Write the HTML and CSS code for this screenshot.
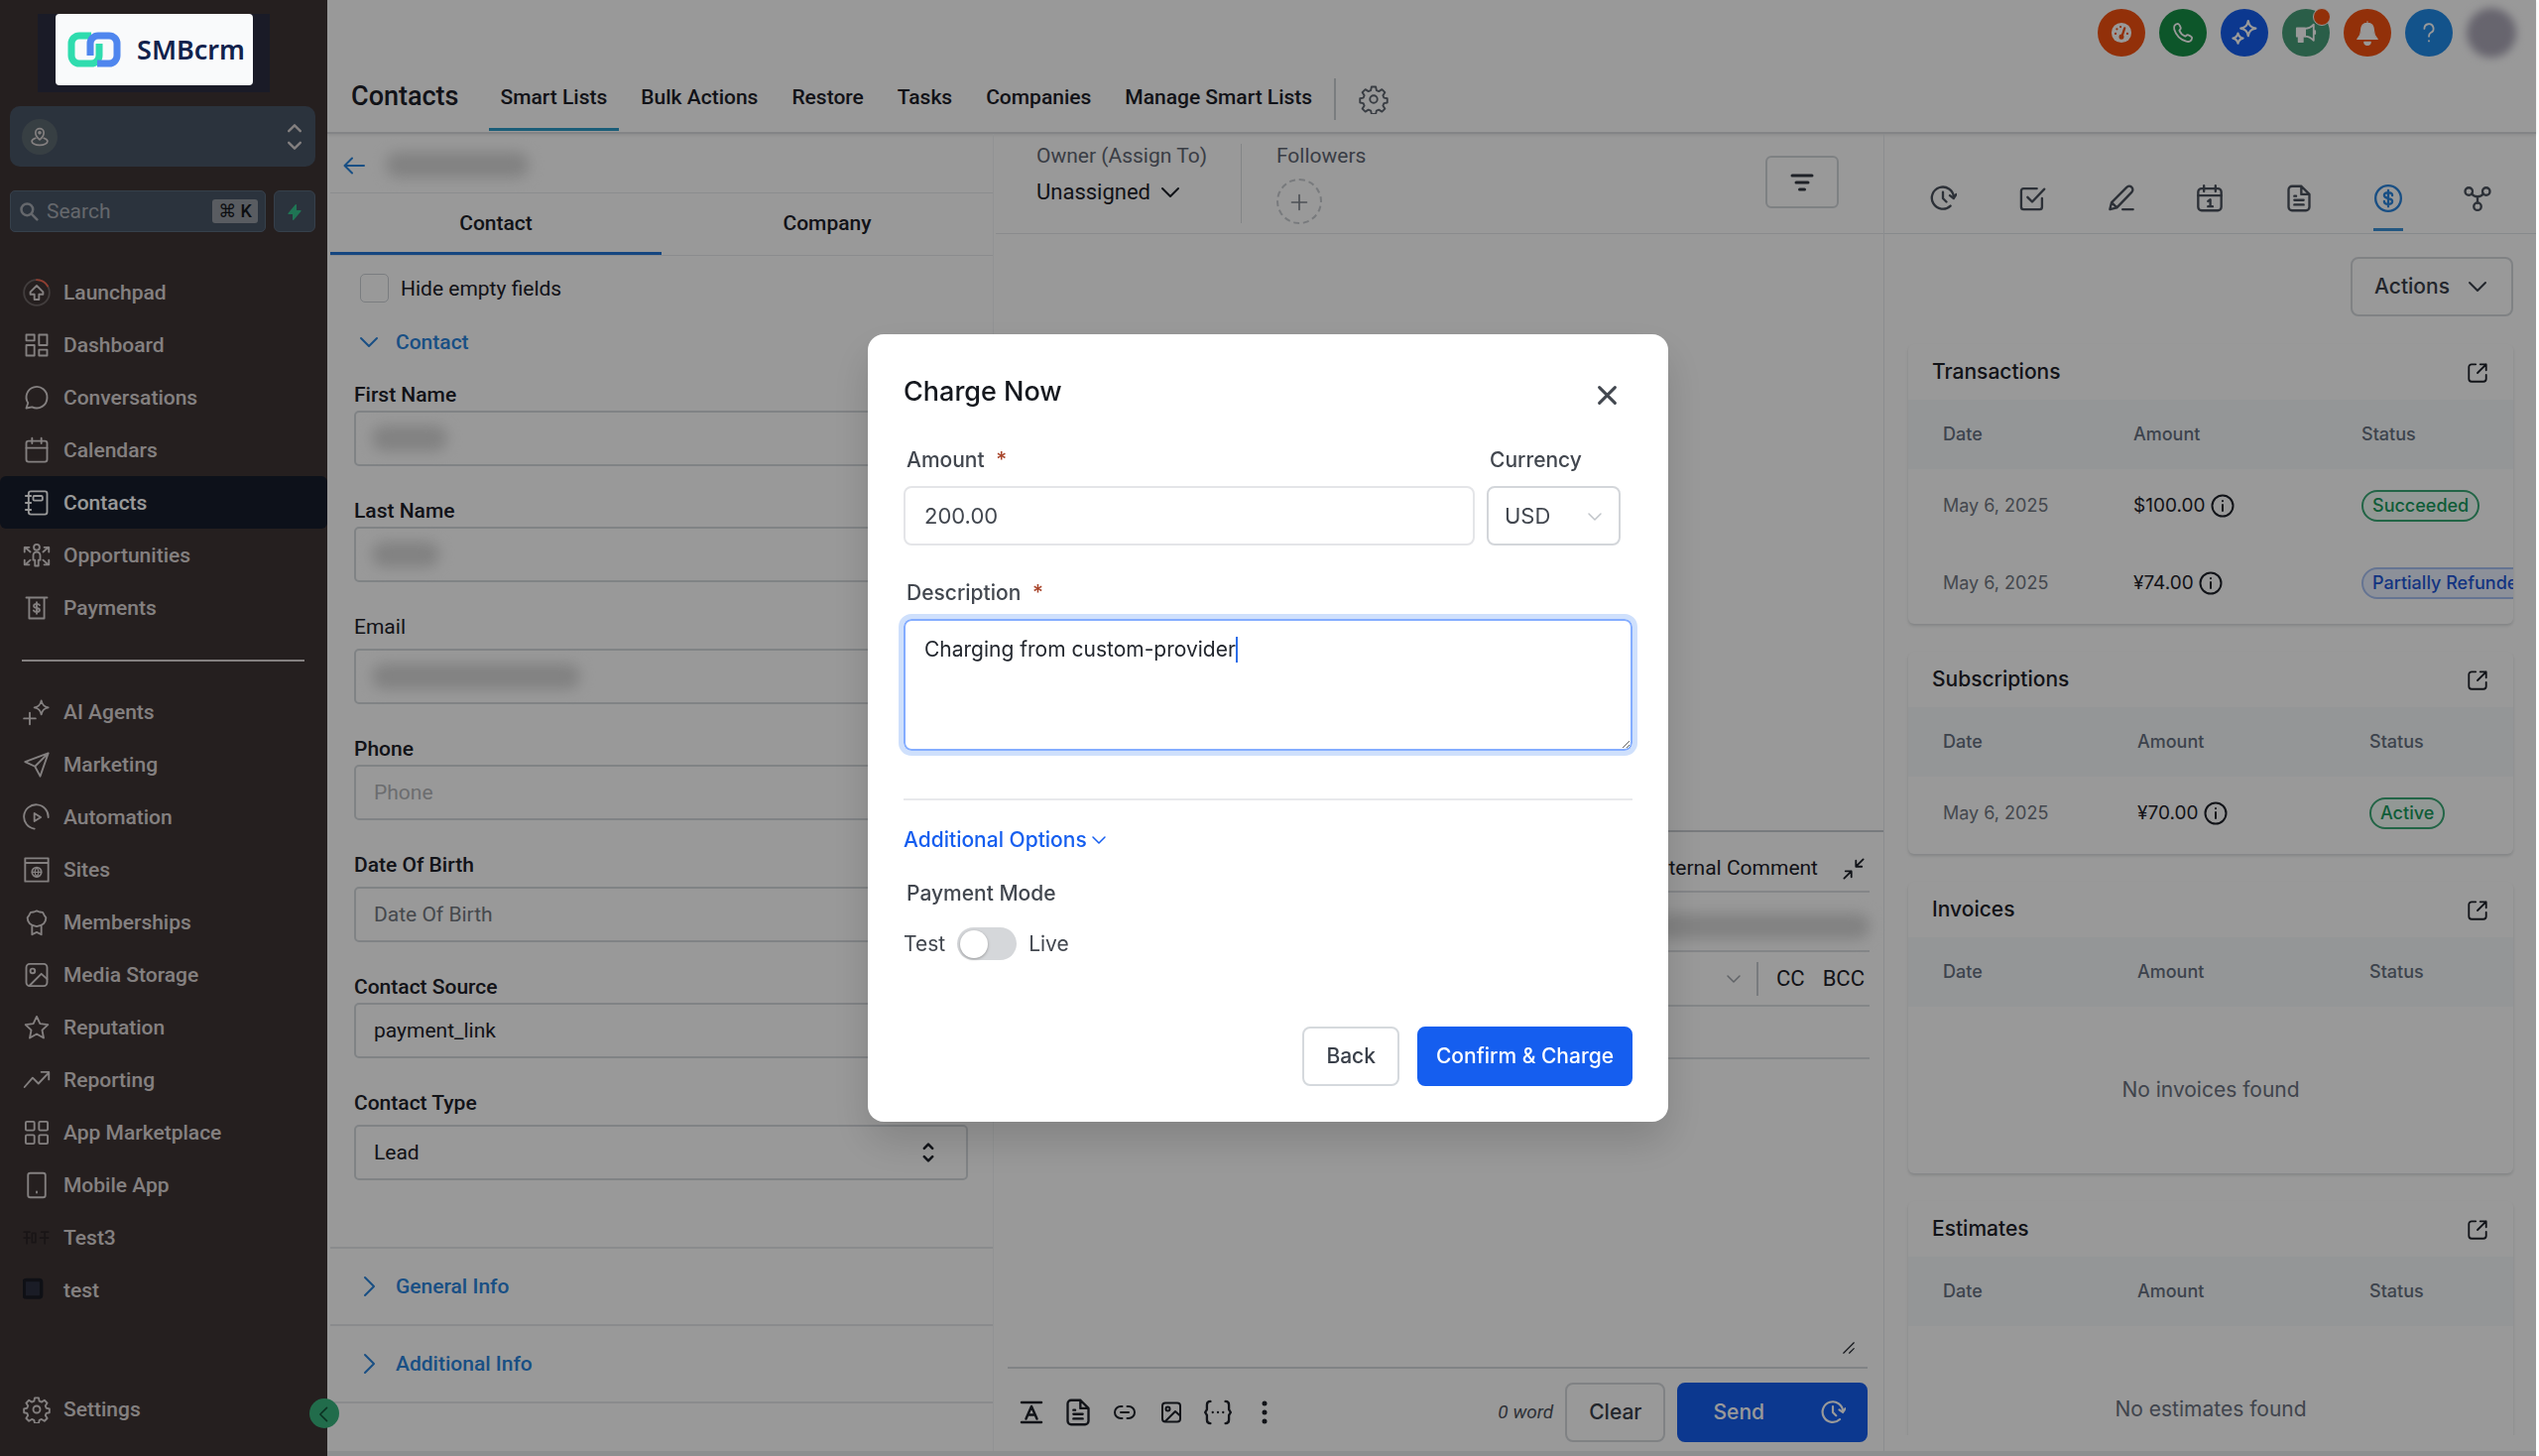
FILE: index.html
```html
<!DOCTYPE html>
<html lang="en">
<head>
    <meta charset="utf-8">
    <meta name="viewport" content="width=device-width, initial-scale=1">
    <title>Contacts</title>
    <link rel="stylesheet" href="styles.css">
</head>
<body>
    <!-- icon sprite -->
    <svg class="sprite" xmlns="http://www.w3.org/2000/svg">
        <symbol id="i-pin" viewBox="0 0 24 24"><path d="M12 15.500s5-4 5-8.500a5 5 0 0 0-10 0c0 4.500 5 8.500 5 8.500z"/><circle cx="12" cy="7" r="1.200"/><path d="M7 13.500C4 14.500 2.500 15.800 2.500 17.500 2.500 20 7 22 12 22s9.500-2 9.500-4.500c0-1.700-1.500-3-4.500-4"/></symbol>
        <symbol id="i-search" viewBox="0 0 24 24"><circle cx="10" cy="10" r="7"/><path d="M15.500 15.500 22 22"/></symbol>
        <symbol id="i-bolt" viewBox="0 0 24 24"><path d="M14 1 3 14h7v9l11-13h-7z" fill="currentColor"/></symbol>
        <symbol id="i-launch" viewBox="0 0 24 24"><circle cx="12" cy="12" r="11" opacity=".3"/><path d="M12 1a11 11 0 0 1 9.500 5.500" stroke="#f0644e"/><path d="m12 6-5.500 5.500v2H10V18h4v-4.500h3.500v-2z"/></symbol>
        <symbol id="i-dash" viewBox="0 0 24 24"><path d="M3 3h7v5H3zM3 12h7v9H3zM14 3h7v9h-7zM14 16h7v5h-7z"/></symbol>
        <symbol id="i-chat" viewBox="0 0 24 24"><path d="M21 12a9 9 0 0 1-13 8l-5 1 1.500-4.500A9 9 0 1 1 21 12z"/></symbol>
        <symbol id="i-cal" viewBox="0 0 24 24"><rect x="3" y="4" width="18" height="18" rx="2"/><path d="M3 10h18M8 1.500V6M16 1.500V6"/></symbol>
        <symbol id="i-book" viewBox="0 0 24 24"><rect x="5" y="2" width="16" height="20" rx="2"/><rect x="9" y="6" width="8" height="4" rx="1"/><path d="M2.500 6H7M2.500 12H7M2.500 18H7"/></symbol>
        <symbol id="i-opp" viewBox="0 0 24 24"><circle cx="12" cy="5" r="2.500"/><path d="M12 9a3 3 0 0 0-3 3v4h1.500v5h3v-5H15v-4a3 3 0 0 0-3-3zM1.500 9V5h4M2 5l4.500 4M22.500 9V5h-4M22 5l-4.500 4M1.500 16v4h4M2 20l4.500-4M22.500 16v4h-4M22 20l-4.500-4"/></symbol>
        <symbol id="i-pay" viewBox="0 0 24 24"><path d="M3 3h18M5.500 3v18h13V3M14.500 9.500C14 8.500 13 8.500 12 8.500c-1.500 0-2.500.7-2.500 1.700 0 2.600 5 1 5 3.600 0 1-1 1.700-2.500 1.700-1.200 0-2.200-.4-2.700-1.300M12 7v10"/></symbol>
        <symbol id="i-ai" viewBox="0 0 24 24"><path d="M16 2c.8 3.800 2.200 5.200 6 6-3.800.8-5.200 2.200-6 6-.8-3.800-2.200-5.200-6-6 3.800-.8 5.200-2.200 6-6zM6 12.500v10M1 17.500h10"/></symbol>
        <symbol id="i-plane" viewBox="0 0 24 24"><path d="M22 2 2 9.500l8.500 4L15 22zM22 2 10.500 13.500"/></symbol>
        <symbol id="i-auto" viewBox="0 0 24 24"><path d="M10 22A10.500 10.500 0 1 1 22 12"/><path d="M10 8.500v7l5.500-3.500z"/></symbol>
        <symbol id="i-site" viewBox="0 0 24 24"><path d="M2 2h20v20H2zM2 6h20"/><circle cx="12" cy="14" r="4"/><path d="M8 14h8M12 10c-2 2.500-2 5.500 0 8 2-2.500 2-5.500 0-8z" stroke-width="1"/></symbol>
        <symbol id="i-member" viewBox="0 0 24 24"><path d="m12 2 2.500 1 2.700.3 1.300 2.400L20 8l-.5 2.700L18 13l-2.400 1.500L12 15.500l-3.600-1L6 13l-1.500-2.300L4 8l1.500-2.300 1.300-2.400L9.500 3zM8 15v7.500l4-2 4 2V15"/></symbol>
        <symbol id="i-image" viewBox="0 0 24 24"><rect x="3" y="2.500" width="18" height="19" rx="3"/><circle cx="8.500" cy="8.500" r="2"/><path d="M6 21 16 11l5 4.500"/></symbol>
        <symbol id="i-star" viewBox="0 0 24 24"><path d="m12 2.500 2.900 6.200 6.800.8-5 4.700 1.300 6.800-6-3.400L6 21l1.300-6.800-5-4.700 6.800-.8z"/></symbol>
        <symbol id="i-trend" viewBox="0 0 24 24"><path d="m1.500 18 7-8 5 5 9-9.500M16 5h6.500v6.500"/></symbol>
        <symbol id="i-apps" viewBox="0 0 24 24"><rect x="2.500" y="2.500" width="7.500" height="7.500" rx="1"/><rect x="14" y="2.500" width="7.500" height="7.500" rx="1"/><rect x="2.500" y="14" width="7.500" height="7.500" rx="1"/><rect x="14" y="14" width="7.500" height="7.500" rx="1"/></symbol>
        <symbol id="i-phone" viewBox="0 0 24 24"><rect x="4.500" y="1.500" width="15" height="21" rx="2"/><path d="M12 17.500v1"/></symbol>
        <symbol id="i-t3" viewBox="0 0 24 24"><path d="M1 7h5M3.500 7v10M1 12h5M8 8h3v8H8zM16 7h6M19 7v10M15 12h7" stroke="#2b2325" stroke-width="1.500"/></symbol>
        <symbol id="i-t4" viewBox="0 0 24 24"><rect x="1" y="3" width="15" height="15" rx="2" fill="#2c3040" stroke="#1a1b24" stroke-width="3"/></symbol>
        <symbol id="i-gear" viewBox="0 0 24 24"><circle cx="12" cy="12" r="3"/><path d="M10.300 2h3.400l.6 2.900 1.900.8 2.500-1.600 2.400 2.400-1.600 2.500.8 1.900 2.700.5v3.400l-2.700.5-.8 1.900 1.600 2.500-2.400 2.400-2.500-1.600-1.900.8-.6 2.700h-3.400l-.6-2.700-1.900-.8-2.500 1.600-2.400-2.400 1.600-2.500-.8-1.900L1 14.800v-3.400l2.700-.5.8-1.900-1.600-2.500 2.400-2.400 2.500 1.600 1.900-.8z"/></symbol>
        <symbol id="i-down" viewBox="0 0 24 24"><path d="m4 8 8 8 8-8"/></symbol>
        <symbol id="i-right" viewBox="0 0 24 24"><path d="m8 3 9 9-9 9"/></symbol>
        <symbol id="i-left" viewBox="0 0 24 24"><path d="m15 4-8 8 8 8"/></symbol>
        <symbol id="i-updown" viewBox="0 0 24 24"><path d="m7 7 5-5 5 5M7 17l5 5 5-5"/></symbol>
        <symbol id="i-back" viewBox="0 0 24 24"><path d="M22 12H3M10 4.500 2.500 12l7.500 7.500"/></symbol>
        <symbol id="i-gauge" viewBox="0 0 24 24"><circle cx="12" cy="12" r="11" fill="currentColor" stroke="none"/><g stroke="#f4500f" stroke-width="2.500"><path d="M12 17.500 15.500 7M5.500 13h.01M7 8h.01M11 5.500h.01M18.500 13h.01"/><circle cx="12" cy="16.500" r="1.500"/></g></symbol>
        <symbol id="i-call" viewBox="0 0 24 24"><path d="M6.500 2C3 2.500 1.500 5 2.500 8.500 4.500 15 9 19.500 15.500 21.500c3.500 1 6-.5 6.500-4 0-1.200-4.500-3.500-5.500-3l-2 1.500C12 15 9 12 8 9.500l1.500-2C10 6.500 7.700 2 6.500 2z"/></symbol>
        <symbol id="i-sparkle" viewBox="0 0 24 24"><path d="M15.500 1c.9 4.500 2.500 6.100 7 7-4.500.9-6.100 2.500-7 7-.9-4.500-2.500-6.100-7-7 4.500-.9 6.100-2.500 7-7zM6 12.500c.6 3 1.700 4.100 4.700 4.700-3 .6-4.100 1.700-4.700 4.700-.6-3-1.700-4.100-4.700-4.700 3-.6 4.100-1.700 4.700-4.700z"/></symbol>
        <symbol id="i-mega" viewBox="0 0 24 24"><path d="M2 7h9v9H8.500v6H4v-6H2z" fill="currentColor"/><path d="M11 7.500c4 0 7-2 9.500-4.500v17.500c-2.500-2.500-5.500-4.500-9.500-4.500zM22 10v3"/></symbol>
        <symbol id="i-bell" viewBox="0 0 24 24"><path d="M12 1.500v2M12 3C8 3 6 6 6 10c0 4-1.500 5.500-3.500 8h19C19.500 15.500 18 14 18 10c0-4-2-7-6-7zM9 20.500h6a3 3 0 0 1-6 0z" fill="currentColor" stroke-width="1"/></symbol>
        <symbol id="i-help" viewBox="0 0 24 24"><path d="M7 7.500a5 5 0 1 1 7 4.500c-1.500.8-2 1.500-2 4M12 21v.2"/></symbol>
        <symbol id="i-plus" viewBox="0 0 24 24"><path d="M12 3v18M3 12h18"/></symbol>
        <symbol id="i-filter" viewBox="0 0 24 24"><path d="M2 5h20M6 12h12M9.500 19h5"/></symbol>
        <symbol id="i-clock" viewBox="0 0 24 24"><path d="M18.500 18.500a9.500 9.500 0 1 1 2.900-7.500M12 6.500V12l3 3M18 9.500l3.300 2.500 2.200-3.500"/></symbol>
        <symbol id="i-check" viewBox="0 0 24 24"><path d="M20.500 12v7.500a2 2 0 0 1-2 2h-14a2 2 0 0 1-2-2v-14a2 2 0 0 1 2-2H16M8 11l4 4L22.500 4"/></symbol>
        <symbol id="i-pen" viewBox="0 0 24 24"><path d="m2 21.500 1.500-6L16.500 2.500a2.700 2.700 0 0 1 4.500 4L8 20zM3.500 15.500 8 20M13 21.500h9"/></symbol>
        <symbol id="i-cal1" viewBox="0 0 24 24"><rect x="2" y="3.500" width="20" height="19" rx="3"/><path d="M2 9.500h20M7 1v5M17 1v5M10.500 14.500 12.500 13v6M10.500 19h4"/></symbol>
        <symbol id="i-doc" viewBox="0 0 24 24"><path d="M14 1.500H6a3 3 0 0 0-3 3v15a3 3 0 0 0 3 3h12a3 3 0 0 0 3-3V8.500zM14 1.500v7h7M8 10h1.500M8 13.500h8M8 17.500h8"/></symbol>
        <symbol id="i-dollar" viewBox="0 0 24 24"><circle cx="12" cy="12" r="11"/><path d="M15.500 9.500c0-1.500-1.500-2.500-3.500-2.500s-3.500 1-3.500 2.500c0 3.500 7 1.500 7 5 0 1.500-1.500 2.500-3.500 2.500s-3.500-1-3.500-2.500M12 5v14"/></symbol>
        <symbol id="i-nodes" viewBox="0 0 24 24"><circle cx="4.500" cy="6" r="3.200"/><circle cx="19.500" cy="6" r="3.200"/><circle cx="12" cy="19" r="3.200"/><path d="M7 8c1 1.500 3 2.500 5 2.500S16 9.500 17 8M12 10.500V16"/></symbol>
        <symbol id="i-open" viewBox="0 0 24 24"><path d="M10 2.500H5.500a3 3 0 0 0-3 3v13a3 3 0 0 0 3 3h13a3 3 0 0 0 3-3V14M15 2.500h6.500V9M21.500 2.500 12 12"/></symbol>
        <symbol id="i-info" viewBox="0 0 24 24"><circle cx="12" cy="12" r="10.500"/><path d="M12 11v6M12 7v.2"/></symbol>
        <symbol id="i-shrink" viewBox="0 0 24 24"><path d="M22.500 1.500 14.500 9.500M14.500 3v6.500H21M1.500 22.500l8-8M3 14.500h6.500V21"/></symbol>
        <symbol id="i-font" viewBox="0 0 24 24"><path d="M2 2h20M2 22h20M6.500 18.500 12 6l5.500 12.500M8.500 14.500h7" stroke-width="2.500"/></symbol>
        <symbol id="i-link" viewBox="0 0 24 24"><path d="M9.500 18H8A6 6 0 0 1 8 6h1.500M14.500 6H16a6 6 0 0 1 0 12h-1.500M8 12h8"/></symbol>
        <symbol id="i-braces" viewBox="0 0 24 24"><path d="M5.500 2.500c-2.500 0-3 1-3 3v4L1 12l1.500 2.500v4c0 2 .5 3 3 3M18.500 2.500c2.500 0 3 1 3 3v4L23 12l-1.500 2.500v4c0 2-.5 3-3 3M7.500 12h.01M12 12h.01M16.500 12h.01"/></symbol>
        <symbol id="i-dots" viewBox="0 0 24 24"><g fill="currentColor" stroke="none"><circle cx="12" cy="3" r="2.500"/><circle cx="12" cy="12" r="2.500"/><circle cx="12" cy="21" r="2.500"/></g></symbol>
        <symbol id="i-grip" viewBox="0 0 24 24"><path d="M3 21 21 3M13 21l8-8"/></symbol>
        <symbol id="i-x" viewBox="0 0 24 24"><path d="m3 3 18 18M21 3 3 21"/></symbol>
    </svg>

    <aside class="sidebar">
        <div class="brand">
            <a class="logo" href="#">
                <svg class="logo-mark" viewBox="0 0 54 36" fill="none" stroke-width="7">
                    <path d="M24 4H12a8 8 0 0 0-8 8v12a8 8 0 0 0 8 8h12a8 8 0 0 0 8-8V12" stroke="#2fdcae"/>
                    <path d="M30 32h12a8 8 0 0 0 8-8V12a8 8 0 0 0-8-8H31a8 8 0 0 0-8 8v12" stroke="#4f86ee"/>
                </svg>
                <span>SMBcrm</span>
            </a>
        </div>

        <button class="account" type="button" aria-label="Switch account">
            <span class="account-pin"><svg class="icon"><use href="#i-pin"/></svg></span>
            <svg class="icon icon-lg"><use href="#i-updown"/></svg>
        </button>

        <div class="search-row">
            <label class="search">
                <svg class="icon"><use href="#i-search"/></svg>
                <input type="search" placeholder="Search" aria-label="Search">
                <kbd>⌘ K</kbd>
            </label>
            <button class="quick" type="button" aria-label="Quick actions"><svg class="icon"><use href="#i-bolt"/></svg></button>
        </div>

        <nav class="nav">
            <a href="#"><svg class="icon"><use href="#i-launch"/></svg>Launchpad</a>
            <a href="#"><svg class="icon"><use href="#i-dash"/></svg>Dashboard</a>
            <a href="#"><svg class="icon"><use href="#i-chat"/></svg>Conversations</a>
            <a href="#"><svg class="icon"><use href="#i-cal"/></svg>Calendars</a>
            <a href="#" class="active"><svg class="icon"><use href="#i-book"/></svg>Contacts</a>
            <a href="#"><svg class="icon"><use href="#i-opp"/></svg>Opportunities</a>
            <a href="#"><svg class="icon"><use href="#i-pay"/></svg>Payments</a>
            <hr>
            <a href="#"><svg class="icon"><use href="#i-ai"/></svg>AI Agents</a>
            <a href="#"><svg class="icon"><use href="#i-plane"/></svg>Marketing</a>
            <a href="#"><svg class="icon"><use href="#i-auto"/></svg>Automation</a>
            <a href="#"><svg class="icon"><use href="#i-site"/></svg>Sites</a>
            <a href="#"><svg class="icon"><use href="#i-member"/></svg>Memberships</a>
            <a href="#"><svg class="icon"><use href="#i-image"/></svg>Media Storage</a>
            <a href="#"><svg class="icon"><use href="#i-star"/></svg>Reputation</a>
            <a href="#"><svg class="icon"><use href="#i-trend"/></svg>Reporting</a>
            <a href="#"><svg class="icon"><use href="#i-apps"/></svg>App Marketplace</a>
            <a href="#"><svg class="icon"><use href="#i-phone"/></svg>Mobile App</a>
            <a href="#"><svg class="icon"><use href="#i-t3"/></svg>Test3</a>
            <a href="#"><svg class="icon"><use href="#i-t4"/></svg>test</a>
            <a href="#" class="nav-settings"><svg class="icon"><use href="#i-gear"/></svg>Settings</a>
        </nav>
        <button class="collapse" type="button" aria-label="Collapse sidebar"><svg class="icon"><use href="#i-left"/></svg></button>
    </aside>

    <main class="main">
        <header class="header">
            <div class="quick-icons">
                <button class="round orange" type="button" aria-label="Dashboard"><svg class="icon"><use href="#i-gauge"/></svg></button>
                <button class="round green" type="button" aria-label="Call"><svg class="icon"><use href="#i-call"/></svg></button>
                <button class="round blue" type="button" aria-label="AI"><svg class="icon icon-lg"><use href="#i-sparkle"/></svg></button>
                <button class="round teal" type="button" aria-label="Announcements"><svg class="icon"><use href="#i-mega"/></svg><span class="dot"></span></button>
                <button class="round orange" type="button" aria-label="Notifications"><svg class="icon icon-lg"><use href="#i-bell"/></svg></button>
                <button class="round sky" type="button" aria-label="Help"><svg class="icon"><use href="#i-help"/></svg></button>
                <span class="avatar"></span>
            </div>
            <div class="page-tabs">
                <h1>Contacts</h1>
                <a href="#" class="active">Smart Lists</a>
                <a href="#">Bulk Actions</a>
                <a href="#">Restore</a>
                <a href="#">Tasks</a>
                <a href="#">Companies</a>
                <a href="#">Manage Smart Lists</a>
                <button class="gear" type="button" aria-label="Settings"><svg class="icon"><use href="#i-gear"/></svg></button>
            </div>
        </header>

        <div class="columns">
            <section class="details">
                <div class="details-head">
                    <a href="#" aria-label="Back"><svg class="icon"><use href="#i-back"/></svg></a>
                    <span class="redacted name"></span>
                </div>
                <div class="details-tabs">
                    <button class="active" type="button">Contact</button>
                    <button type="button">Company</button>
                </div>
                <form class="details-form">
                    <label class="hide-empty"><input type="checkbox">Hide empty fields</label>
                    <button class="group-open" type="button"><svg class="icon"><use href="#i-down"/></svg>Contact</button>
                    <div class="field">
                        <label for="first">First Name</label>
                        <div class="box"><input id="first" type="text"><span class="redacted first"></span></div>
                    </div>
                    <div class="field">
                        <label for="last">Last Name</label>
                        <div class="box"><input id="last" type="text"><span class="redacted last"></span></div>
                    </div>
                    <div class="field roomy light">
                        <label for="email">Email</label>
                        <div class="box"><input id="email" type="email"><span class="redacted email"></span></div>
                    </div>
                    <div class="field">
                        <label for="phone">Phone</label>
                        <div class="box"><input id="phone" type="tel" placeholder="Phone"></div>
                    </div>
                    <div class="field roomy">
                        <label for="dob">Date Of Birth</label>
                        <div class="box dark"><input id="dob" type="text" placeholder="Date Of Birth"></div>
                    </div>
                    <div class="field">
                        <label for="source">Contact Source</label>
                        <div class="box"><input id="source" type="text" value="payment_link"></div>
                    </div>
                    <div class="field roomy">
                        <label for="type">Contact Type</label>
                        <div class="box">
                            <select id="type"><option>Lead</option></select>
                            <svg class="icon"><use href="#i-updown"/></svg>
                        </div>
                    </div>
                </form>
                <button class="group" type="button"><svg class="icon"><use href="#i-right"/></svg>General Info</button>
                <button class="group" type="button"><svg class="icon"><use href="#i-right"/></svg>Additional Info</button>
            </section>

            <section class="conversation">
                <div class="owner-bar">
                    <div class="owner">
                        <span>Owner (Assign To)</span>
                        <button type="button">Unassigned <svg class="icon"><use href="#i-down"/></svg></button>
                    </div>
                    <div class="followers">
                        <span>Followers</span>
                        <button type="button" aria-label="Add follower"><svg class="icon"><use href="#i-plus"/></svg></button>
                    </div>
                    <button class="filter" type="button" aria-label="Filter"><svg class="icon"><use href="#i-filter"/></svg></button>
                </div>
                <div class="composer">
                    <div class="row tabs-row">
                        <button type="button">Internal Comment</button>
                        <button type="button" aria-label="Minimise"><svg class="icon"><use href="#i-shrink"/></svg></button>
                    </div>
                    <div class="row from-row"><span class="redacted from"></span></div>
                    <div class="row to-row">
                        <svg class="icon"><use href="#i-down"/></svg>
                        <div class="cc"><button type="button">CC</button><button type="button">BCC</button></div>
                    </div>
                    <div class="row subject-row"></div>
                    <div class="editor"><svg class="icon"><use href="#i-grip"/></svg></div>
                    <div class="toolbar">
                        <button type="button" aria-label="Text style"><svg class="icon"><use href="#i-font"/></svg></button>
                        <button type="button" aria-label="Template"><svg class="icon icon-lg"><use href="#i-doc"/></svg></button>
                        <button type="button" aria-label="Link"><svg class="icon"><use href="#i-link"/></svg></button>
                        <button type="button" aria-label="Image"><svg class="icon"><use href="#i-image"/></svg></button>
                        <button type="button" aria-label="Custom values"><svg class="icon icon-lg"><use href="#i-braces"/></svg></button>
                        <button type="button" aria-label="More"><svg class="icon"><use href="#i-dots"/></svg></button>
                        <span class="count">0 word</span>
                        <button class="btn" type="button">Clear</button>
                        <button class="btn btn-primary send" type="button">Send <svg class="icon"><use href="#i-clock"/></svg></button>
                    </div>
                </div>
            </section>

            <section class="payments">
                <div class="panel-icons">
                    <button type="button" aria-label="Activity"><svg class="icon"><use href="#i-clock"/></svg></button>
                    <button type="button" aria-label="Tasks"><svg class="icon"><use href="#i-check"/></svg></button>
                    <button type="button" aria-label="Notes"><svg class="icon"><use href="#i-pen"/></svg></button>
                    <button type="button" aria-label="Appointments"><svg class="icon"><use href="#i-cal1"/></svg></button>
                    <button type="button" aria-label="Documents"><svg class="icon"><use href="#i-doc"/></svg></button>
                    <button type="button" aria-label="Payments" class="active"><svg class="icon"><use href="#i-dollar"/></svg></button>
                    <button type="button" aria-label="Associations"><svg class="icon"><use href="#i-nodes"/></svg></button>
                </div>
                <div class="panel-body">
                    <button class="btn actions" type="button">Actions <svg class="icon"><use href="#i-down"/></svg></button>

                    <div class="card">
                        <div class="card-head"><h2>Transactions</h2><a href="#" aria-label="Open transactions"><svg class="icon"><use href="#i-open"/></svg></a></div>
                        <table>
                            <thead><tr><th class="col-date">Date</th><th class="col-amount">Amount</th><th>Status</th></tr></thead>
                            <tbody>
                                <tr><td>May 6, 2025</td><td class="amount">$100.00 <svg class="icon"><use href="#i-info"/></svg></td><td><span class="tag tag-green">Succeeded</span></td></tr>
                                <tr><td>May 6, 2025</td><td class="amount">¥74.00 <svg class="icon"><use href="#i-info"/></svg></td><td><span class="tag tag-blue">Partially Refunded</span></td></tr>
                            </tbody>
                        </table>
                    </div>

                    <div class="card">
                        <div class="card-head"><h2>Subscriptions</h2><a href="#" aria-label="Open subscriptions"><svg class="icon"><use href="#i-open"/></svg></a></div>
                        <table class="even">
                            <thead><tr><th class="col-date">Date</th><th class="col-amount">Amount</th><th>Status</th></tr></thead>
                            <tbody>
                                <tr><td>May 6, 2025</td><td class="amount">¥70.00 <svg class="icon"><use href="#i-info"/></svg></td><td><span class="tag tag-green">Active</span></td></tr>
                            </tbody>
                        </table>
                    </div>

                    <div class="card">
                        <div class="card-head"><h2>Invoices</h2><a href="#" aria-label="Open invoices"><svg class="icon"><use href="#i-open"/></svg></a></div>
                        <table class="even">
                            <thead><tr><th class="col-date">Date</th><th class="col-amount">Amount</th><th>Status</th></tr></thead>
                        </table>
                        <p class="empty">No invoices found</p>
                    </div>

                    <div class="card">
                        <div class="card-head"><h2>Estimates</h2><a href="#" aria-label="Open estimates"><svg class="icon"><use href="#i-open"/></svg></a></div>
                        <table class="even">
                            <thead><tr><th class="col-date">Date</th><th class="col-amount">Amount</th><th>Status</th></tr></thead>
                        </table>
                        <p class="empty">No estimates found</p>
                    </div>
                </div>
            </section>
        </div>
    </main>

    <div class="overlay">
        <form class="modal" role="dialog" aria-labelledby="modalTitle">
            <div class="modal-head">
                <h2 id="modalTitle">Charge Now</h2>
                <button type="button" aria-label="Close"><svg class="icon"><use href="#i-x"/></svg></button>
            </div>
            <div class="money-row">
                <div class="modal-field amount-field">
                    <label for="amount">Amount <em>*</em></label>
                    <input id="amount" type="text" value="200.00">
                </div>
                <div class="modal-field currency-field">
                    <label for="currency">Currency</label>
                    <div class="select-box">
                        <select id="currency"><option>USD</option></select>
                        <svg class="icon"><use href="#i-down"/></svg>
                    </div>
                </div>
            </div>
            <div class="modal-field">
                <label for="description">Description <em>*</em></label>
                <div class="area-box">
                    <textarea id="description">Charging from custom-provider</textarea>
                    <span class="caret"></span>
                </div>
            </div>
            <hr>
            <button class="more-options" type="button">Additional Options<svg class="icon"><use href="#i-down"/></svg></button>
            <div class="mode-title">Payment Mode</div>
            <label class="mode">Test <input type="checkbox" class="switch"> Live</label>
            <div class="modal-actions">
                <button class="btn" type="button">Back</button>
                <button class="btn btn-primary" type="submit">Confirm &amp; Charge</button>
            </div>
        </form>
    </div>
</body>
</html>
```
FILE: styles.css
```css
* {
    box-sizing: border-box;
    margin: 0;
    padding: 0;
}

body {
    display: flex;
    height: 100vh;
    padding-right: 3px;
    overflow: hidden;
    font-family: Roboto, "Liberation Sans", sans-serif;
    font-size: 21px;
    line-height: 24px;
    color: #1d2129;
    background: #fff;
}

button, input, select, textarea {
    font: inherit;
    color: inherit;
    background: none;
    border: none;
}

a {
    color: inherit;
    text-decoration: none;
}

.sprite {
    position: absolute;
    width: 0;
    height: 0;
}

.icon {
    width: 24px;
    height: 24px;
    flex: none;
    fill: none;
    stroke: currentColor;
    stroke-width: 2;
    stroke-linecap: round;
    stroke-linejoin: round;
}

.icon-lg {
    width: 28px;
    height: 28px;
}

.redacted {
    height: 26px;
    border-radius: 12px;
    background: #d8d8d8;
    filter: blur(7px);
}

/* Sidebar */
.sidebar {
    position: relative;
    width: 330px;
    flex: none;
    display: flex;
    flex-direction: column;
    background: #3f3535;
    color: #dcd6d6;
    font-weight: 500;
}

.brand {
    display: flex;
    margin: 14px 58px 14px 38px;
    padding: 0 17px 7px 18px;
    background: #2c2d42;
}

/* stays bright above the overlay */
.logo {
    position: relative;
    z-index: 20;
    flex: 1;
    height: 72px;
    display: flex;
    align-items: center;
    justify-content: flex-end;
    gap: 16px;
    padding-right: 8px;
    border-radius: 4px;
    background: #f9fafb;
    color: #12224c;
    font-family: "Noto Sans", sans-serif;
    font-weight: 600;
    font-size: 27px;
}

.logo-mark {
    width: 54px;
    height: 36px;
}

.account {
    display: flex;
    align-items: center;
    justify-content: space-between;
    height: 61px;
    margin: 0 12px 24px 10px;
    padding: 0 7px 0 12px;
    border-radius: 10px;
    background: #485566;
}

.account-pin {
    display: flex;
    align-items: center;
    justify-content: center;
    width: 36px;
    height: 36px;
    border-radius: 50%;
    background: #5d6970;
}

.account-pin .icon {
    width: 20px;
    height: 20px;
}

.search-row {
    display: flex;
    gap: 8px;
    margin: 0 12px 34px 10px;
}

.search {
    flex: 1;
    min-width: 0;
    display: flex;
    align-items: center;
    gap: 8px;
    height: 42px;
    padding: 0 7px 0 8px;
    border: 1px solid #5b6b7e;
    border-radius: 5px;
    background: #485566;
    color: #a9adb5;
    font-weight: 400;
}

.search .icon {
    width: 20px;
    height: 20px;
    stroke-width: 3;
}

.search input {
    flex: 1;
    min-width: 0;
    outline: none;
}

.search input::placeholder {
    color: #a9adb5;
}

.search kbd {
    flex: none;
    padding: 0 6px;
    border-radius: 3px;
    background: #959aa2;
    color: #15181d;
    font: 500 18px/24px Roboto, "DejaVu Sans", sans-serif;
}

.quick {
    flex: none;
    width: 42px;
    border: 1px solid #5b6b7e;
    border-radius: 6px;
    background: #485566;
    color: #35c48d;
}

.quick .icon {
    width: 16px;
    height: 16px;
    vertical-align: middle;
}

.nav {
    flex: 1;
    display: flex;
    flex-direction: column;
}

.nav a {
    display: flex;
    align-items: center;
    gap: 13px;
    flex: 0 1 53px;
    padding-left: 23px;
}

.nav a .icon {
    width: 28px;
    height: 28px;
    stroke-width: 1.6;
}

.nav a.active {
    border-radius: 6px;
    background: #161d2c;
    color: #fff;
}

.nav hr {
    margin: 26px 23px 24px 22px;
    border: 0;
    border-top: 2px solid #dcd6d6;
}

.nav .nav-settings {
    margin-top: auto;
    margin-bottom: 21px;
}

.collapse {
    position: absolute;
    right: -12px;
    bottom: 28px;
    width: 30px;
    height: 30px;
    border-radius: 50%;
    background: #38b57e;
    color: #14543a;
}

.collapse .icon {
    width: 20px;
    height: 20px;
    vertical-align: middle;
}

/* Header */
.main {
    flex: 1;
    min-width: 0;
    display: flex;
    flex-direction: column;
}

.header {
    flex: none;
    height: 135px;
    border-bottom: 2px solid #dadde0;
    box-shadow: 0 1px 3px rgba(0, 0, 0, 0.1);
}

.quick-icons {
    display: flex;
    align-items: center;
    justify-content: flex-end;
    gap: 14px;
    height: 66px;
    padding-right: 20px;
}

.round {
    position: relative;
    display: flex;
    align-items: center;
    justify-content: center;
    width: 48px;
    height: 48px;
    border-radius: 50%;
    color: #fff;
}

.round .icon {
    width: 22px;
    height: 22px;
}

.round .icon-lg {
    width: 26px;
    height: 26px;
}

.orange { background: #f4500f; }
.green { background: #178f46; }
.blue { background: #155eef; }
.teal { background: #479d78; }
.sky { background: #218ae8; }

.dot {
    position: absolute;
    top: -1px;
    right: -1px;
    width: 18px;
    height: 18px;
    border: 1px solid #fff;
    border-radius: 50%;
    background: #f4500f;
}

.avatar {
    width: 50px;
    height: 50px;
    border-radius: 50%;
    background: #aca8b8;
    filter: blur(4px);
}

.page-tabs {
    display: flex;
    align-items: center;
    height: 67px;
    padding-left: 24px;
    font-weight: 500;
}

.page-tabs h1 {
    margin-right: 30px;
    padding-bottom: 6px;
    font-size: 27px;
    font-weight: 500;
}

.page-tabs a {
    display: flex;
    align-items: center;
    height: 64px;
    margin-right: 10px;
    padding: 0 12px;
    border-bottom: 3px solid transparent;
}

.page-tabs a.active {
    border-color: #2c9cc9;
}

.gear {
    height: 42px;
    padding-left: 23px;
    border-left: 2px solid #ccd0d4;
    color: #5f6670;
}

.gear .icon {
    width: 30px;
    height: 30px;
    stroke-width: 1.5;
    vertical-align: middle;
}

.columns {
    flex: 1;
    min-height: 0;
    display: grid;
    grid-template-columns: 672px 1fr 657px;
    border-bottom: 5px solid #eceef0;
}

/* Contact details */
.details {
    padding-left: 3px;
    border-right: 1px solid #f2f4f5;
}

.details-head {
    display: flex;
    align-items: center;
    gap: 20px;
    height: 60px;
    padding: 3px 0 0 12px;
    border-bottom: 1px solid #e8eaed;
    color: #2a84dc;
}

.details-head .icon {
    vertical-align: middle;
}

.redacted.name {
    width: 144px;
}

.details-tabs {
    display: grid;
    grid-template-columns: 1fr 1fr;
    height: 63px;
    border-bottom: 1px solid #e8eaed;
}

.details-tabs button {
    border-bottom: 3px solid transparent;
    font-weight: 500;
}

.details-tabs .active {
    border-color: #2376d6;
}

.details-form {
    padding: 18px 25px 34px 24px;
}

.hide-empty {
    display: flex;
    align-items: center;
    gap: 12px;
    margin: 0 0 28px 6px;
}

.hide-empty input {
    appearance: none;
    width: 29px;
    height: 29px;
    border: 1px solid #ccd1d6;
    border-radius: 5px;
}

.group-open, .group {
    display: flex;
    align-items: center;
    gap: 15px;
    color: #2a84dc;
    font-weight: 500;
}

.group-open {
    margin: 0 0 29px 3px;
}

.field {
    display: flex;
    flex-direction: column;
    gap: 4px;
    margin-bottom: 33px;
}

.field.roomy {
    gap: 10px;
}

.field label {
    font-weight: 500;
}

.field.light label {
    font-weight: 400;
}

.box {
    position: relative;
}

.box input, .box select {
    display: block;
    width: 100%;
    height: 56px;
    padding: 0 18px;
    appearance: none;
    border: 2px solid #d6dade;
    border-radius: 5px;
}

.box input::placeholder {
    color: #b4b6ba;
}

.box.dark input::placeholder {
    color: #747980;
}

.box .icon {
    position: absolute;
    right: 30px;
    top: 18px;
    width: 20px;
    height: 20px;
    stroke-width: 3;
}

.box .redacted {
    position: absolute;
    left: 18px;
    top: 15px;
}

.redacted.first { width: 76px; }
.redacted.last { width: 68px; }
.redacted.email { width: 210px; }

.group {
    width: 100%;
    height: 78px;
    padding-left: 27px;
    border-top: 2px solid #e6e8eb;
}

.group:last-child {
    height: 80px;
    border-bottom: 2px solid #e6e8eb;
}

/* Conversation */
.conversation {
    display: flex;
    flex-direction: column;
    padding-left: 2px;
    border-right: 1px solid #e8ebee;
}

.owner-bar {
    display: flex;
    height: 101px;
    padding-right: 45px;
    border-bottom: 1px solid #e6e8eb;
}

.owner {
    display: flex;
    flex-direction: column;
    gap: 13px;
    margin: 10px 0;
    padding: 0 34px 0 41px;
    border-right: 1px solid #dadee2;
}

.owner span, .followers span {
    color: #5f6773;
}

.owner button {
    display: flex;
    align-items: center;
    gap: 8px;
    font-size: 22px;
}

.followers {
    display: flex;
    flex-direction: column;
    gap: 11px;
    padding: 10px 0 0 35px;
}

.followers button {
    width: 46px;
    height: 46px;
    border: 2px dashed #c8ccd0;
    border-radius: 50%;
    color: #80868e;
}

.followers .icon {
    width: 20px;
    height: 20px;
    vertical-align: middle;
}

.filter {
    display: flex;
    align-items: center;
    justify-content: center;
    width: 74px;
    height: 53px;
    margin: 22px 0 0 auto;
    border: 2px solid #d3d7db;
    border-radius: 6px;
    color: #343a44;
}

.filter .icon {
    stroke-width: 3;
}

.composer {
    margin-top: auto;
    border-top: 2px solid #c9cdd2;
}

.row {
    display: flex;
    align-items: center;
    justify-content: flex-end;
    margin: 0 14px 0 12px;
    border-bottom: 2px solid #dcdfe3;
}

.tabs-row {
    gap: 25px;
    height: 61px;
    padding: 13px 5px 0 0;
}

.tabs-row .icon {
    width: 22px;
    height: 22px;
    vertical-align: middle;
}

.from-row {
    height: 60px;
    padding-top: 10px;
}

.redacted.from {
    width: 320px;
}

.to-row {
    height: 55px;
    gap: 14px;
    padding-right: 5px;
}

.to-row .icon {
    width: 18px;
    height: 18px;
    color: #a0a5ac;
}

.cc {
    display: flex;
    gap: 18px;
    padding: 5px 0 5px 18px;
    border-left: 2px solid #c9cdd2;
    font-size: 22px;
}

.subject-row {
    height: 53px;
}

.editor {
    display: flex;
    align-items: flex-end;
    justify-content: flex-end;
    height: 312px;
    margin: 0 16px 0 12px;
    padding: 0 12px 12px 0;
    border-bottom: 2px solid #d6dade;
}

.editor .icon {
    width: 14px;
    height: 14px;
}

.toolbar {
    display: flex;
    align-items: center;
    gap: 12px;
    padding: 14px 16px 9px 18px;
}

.toolbar > button:not(.btn) {
    display: flex;
    justify-content: center;
    width: 35px;
}

.count {
    margin-left: auto;
    color: #4d535c;
    font-size: 19px;
    font-style: italic;
}

.btn {
    height: 60px;
    padding: 0 22px;
    border: 2px solid #d5d9dd;
    border-radius: 8px;
    color: #3a404a;
    font-family: Inter, sans-serif;
    font-weight: 500;
}

.btn-primary {
    border-color: #155eef;
    background: #155eef;
    color: #fff;
}

.send {
    display: flex;
    align-items: center;
    gap: 56px;
    padding: 0 20px 0 34px;
}

.send .icon {
    width: 26px;
    height: 26px;
}

/* Payments panel */
.payments {
    display: flex;
    flex-direction: column;
    min-height: 0;
    font-family: Inter, sans-serif;
}

.panel-icons {
    flex: none;
    display: flex;
    justify-content: space-between;
    height: 101px;
    padding: 34px 44px 0 44px;
    border-bottom: 1px solid #e2e6e9;
    color: #4a515c;
}

.panel-icons button {
    width: 30px;
    height: 64px;
    padding-top: 6px;
    border-bottom: 3px solid transparent;
}

.panel-icons .icon {
    width: 28px;
    height: 28px;
}

.panel-icons .active {
    border-color: #3b92d8;
    color: #2a84dc;
}

.panel-body {
    flex: 1;
    min-height: 0;
    display: flex;
    flex-direction: column;
    gap: 28px;
    margin-bottom: 16px;
    padding: 23px 23px 0 24px;
    overflow: hidden;
}

.actions {
    flex: none;
    align-self: flex-end;
    display: flex;
    align-items: center;
    gap: 16px;
}

.card {
    flex: none;
    overflow: hidden;
    border-radius: 6px;
    box-shadow: 0 2px 3px rgba(16, 24, 40, 0.15);
}

.card-head {
    display: flex;
    align-items: center;
    justify-content: space-between;
    height: 56px;
    padding: 0 25px 0 24px;
}

.card-head h2 {
    font-size: 21px;
    font-weight: 500;
}

.card-head .icon {
    width: 22px;
    height: 22px;
    vertical-align: middle;
}

table {
    width: 100%;
    table-layout: fixed;
    border-collapse: collapse;
    font-size: 18px;
    white-space: nowrap;
}

th {
    height: 70px;
    background: #f7fafc;
    color: #667080;
    font-weight: 500;
    text-align: left;
}

td {
    height: 78px;
    padding-bottom: 4px;
    color: #727883;
}

th:first-child, td:first-child {
    padding-left: 35px;
}

.col-date {
    width: 227px;
}

.col-amount {
    width: 230px;
}

.even .col-date {
    width: 231px;
}

.even .col-amount {
    width: 234px;
}

.amount {
    color: #1d2129;
    font-size: 19px;
}

.amount .icon {
    vertical-align: middle;
}

.tag {
    display: inline-block;
    padding: 0 9px;
    border: 2px solid #3aa876;
    border-radius: 16px;
    font-weight: 500;
    line-height: 28px;
}

.tag-green {
    color: #189a5d;
    background: #f4fdf8;
}

.tag-blue {
    border-color: #a8c2f4;
    background: #e9f1ff;
    color: #1f56d8;
}

.empty {
    height: 168px;
    color: #6b7280;
    line-height: 168px;
    text-align: center;
}

/* Charge modal */
.overlay {
    position: fixed;
    inset: 0 3px 0 0;
    z-index: 10;
    display: flex;
    align-items: center;
    justify-content: center;
    background: rgba(0, 0, 0, 0.4);
}

.modal {
    width: 807px;
    padding: 36px;
    border-radius: 16px;
    background: #fff;
    box-shadow: 0 20px 40px rgba(0, 0, 0, 0.15);
    color: #42474f;
    font-family: Inter, sans-serif;
}

.modal-head {
    display: flex;
    align-items: center;
    justify-content: space-between;
    height: 44px;
    margin-bottom: 35px;
    padding-right: 15px;
}

.modal-head h2 {
    color: #15181e;
    font-size: 27px;
    font-weight: 500;
}

.modal-head button {
    padding-top: 4px;
}

.modal-head .icon {
    width: 21px;
    height: 21px;
    stroke-width: 3.500;
    vertical-align: middle;
}

.money-row {
    display: flex;
    gap: 12px;
    margin: 0 12px 36px 0;
}

.amount-field {
    flex: 1;
}

.currency-field {
    width: 135px;
}

.modal-field label {
    display: block;
    margin: 0 0 14px 3px;
    font-weight: 500;
}

.modal-field em {
    margin-left: 6px;
    color: #a8442a;
    font-style: normal;
}

.modal-field input, .modal-field select, .modal-field textarea {
    display: block;
    width: 100%;
    height: 60px;
    padding: 0 19px;
    appearance: none;
    border: 2px solid #e4e5e8;
    border-radius: 8px;
    font-size: 22px;
}

.modal-field select {
    padding: 0 16px;
    border-color: #d3d6da;
}

.select-box, .area-box {
    position: relative;
}

.select-box .icon {
    position: absolute;
    right: 17px;
    top: 22px;
    width: 18px;
    height: 18px;
    color: #c0c4c9;
}

.modal-field textarea {
    height: 133px;
    padding: 15px 19px;
    border-color: #84adff;
    outline: 5px solid #cfe0fc;
    color: #23272e;
    font-size: 21px;
    line-height: 28px;
}

.caret {
    position: absolute;
    left: 335px;
    top: 18px;
    width: 2px;
    height: 26px;
    background: #2b6de8;
}

.modal hr {
    margin: 48px 0 28px;
    border: 0;
    border-top: 2px solid #e8e9ec;
}

.more-options {
    display: flex;
    align-items: center;
    gap: 3px;
    margin-bottom: 30px;
    color: #155eef;
    font-weight: 500;
}

.more-options .icon {
    width: 18px;
    height: 18px;
}

.mode-title {
    margin: 0 0 22px 3px;
    font-weight: 500;
}

.mode {
    display: flex;
    align-items: center;
    gap: 12px;
    margin-bottom: 67px;
}

.switch {
    appearance: none;
    width: 60px;
    height: 33px;
    border-radius: 17px;
    background: #d5d7da;
}

.switch::before {
    content: "";
    display: block;
    width: 28px;
    height: 28px;
    margin: 3px;
    border-radius: 50%;
    background: #fff;
    box-shadow: 0 1px 3px rgba(0, 0, 0, 0.3);
}

.modal-actions {
    display: flex;
    justify-content: flex-end;
    gap: 18px;
}

.modal-actions .btn-primary {
    padding: 0 17px;
}
```
